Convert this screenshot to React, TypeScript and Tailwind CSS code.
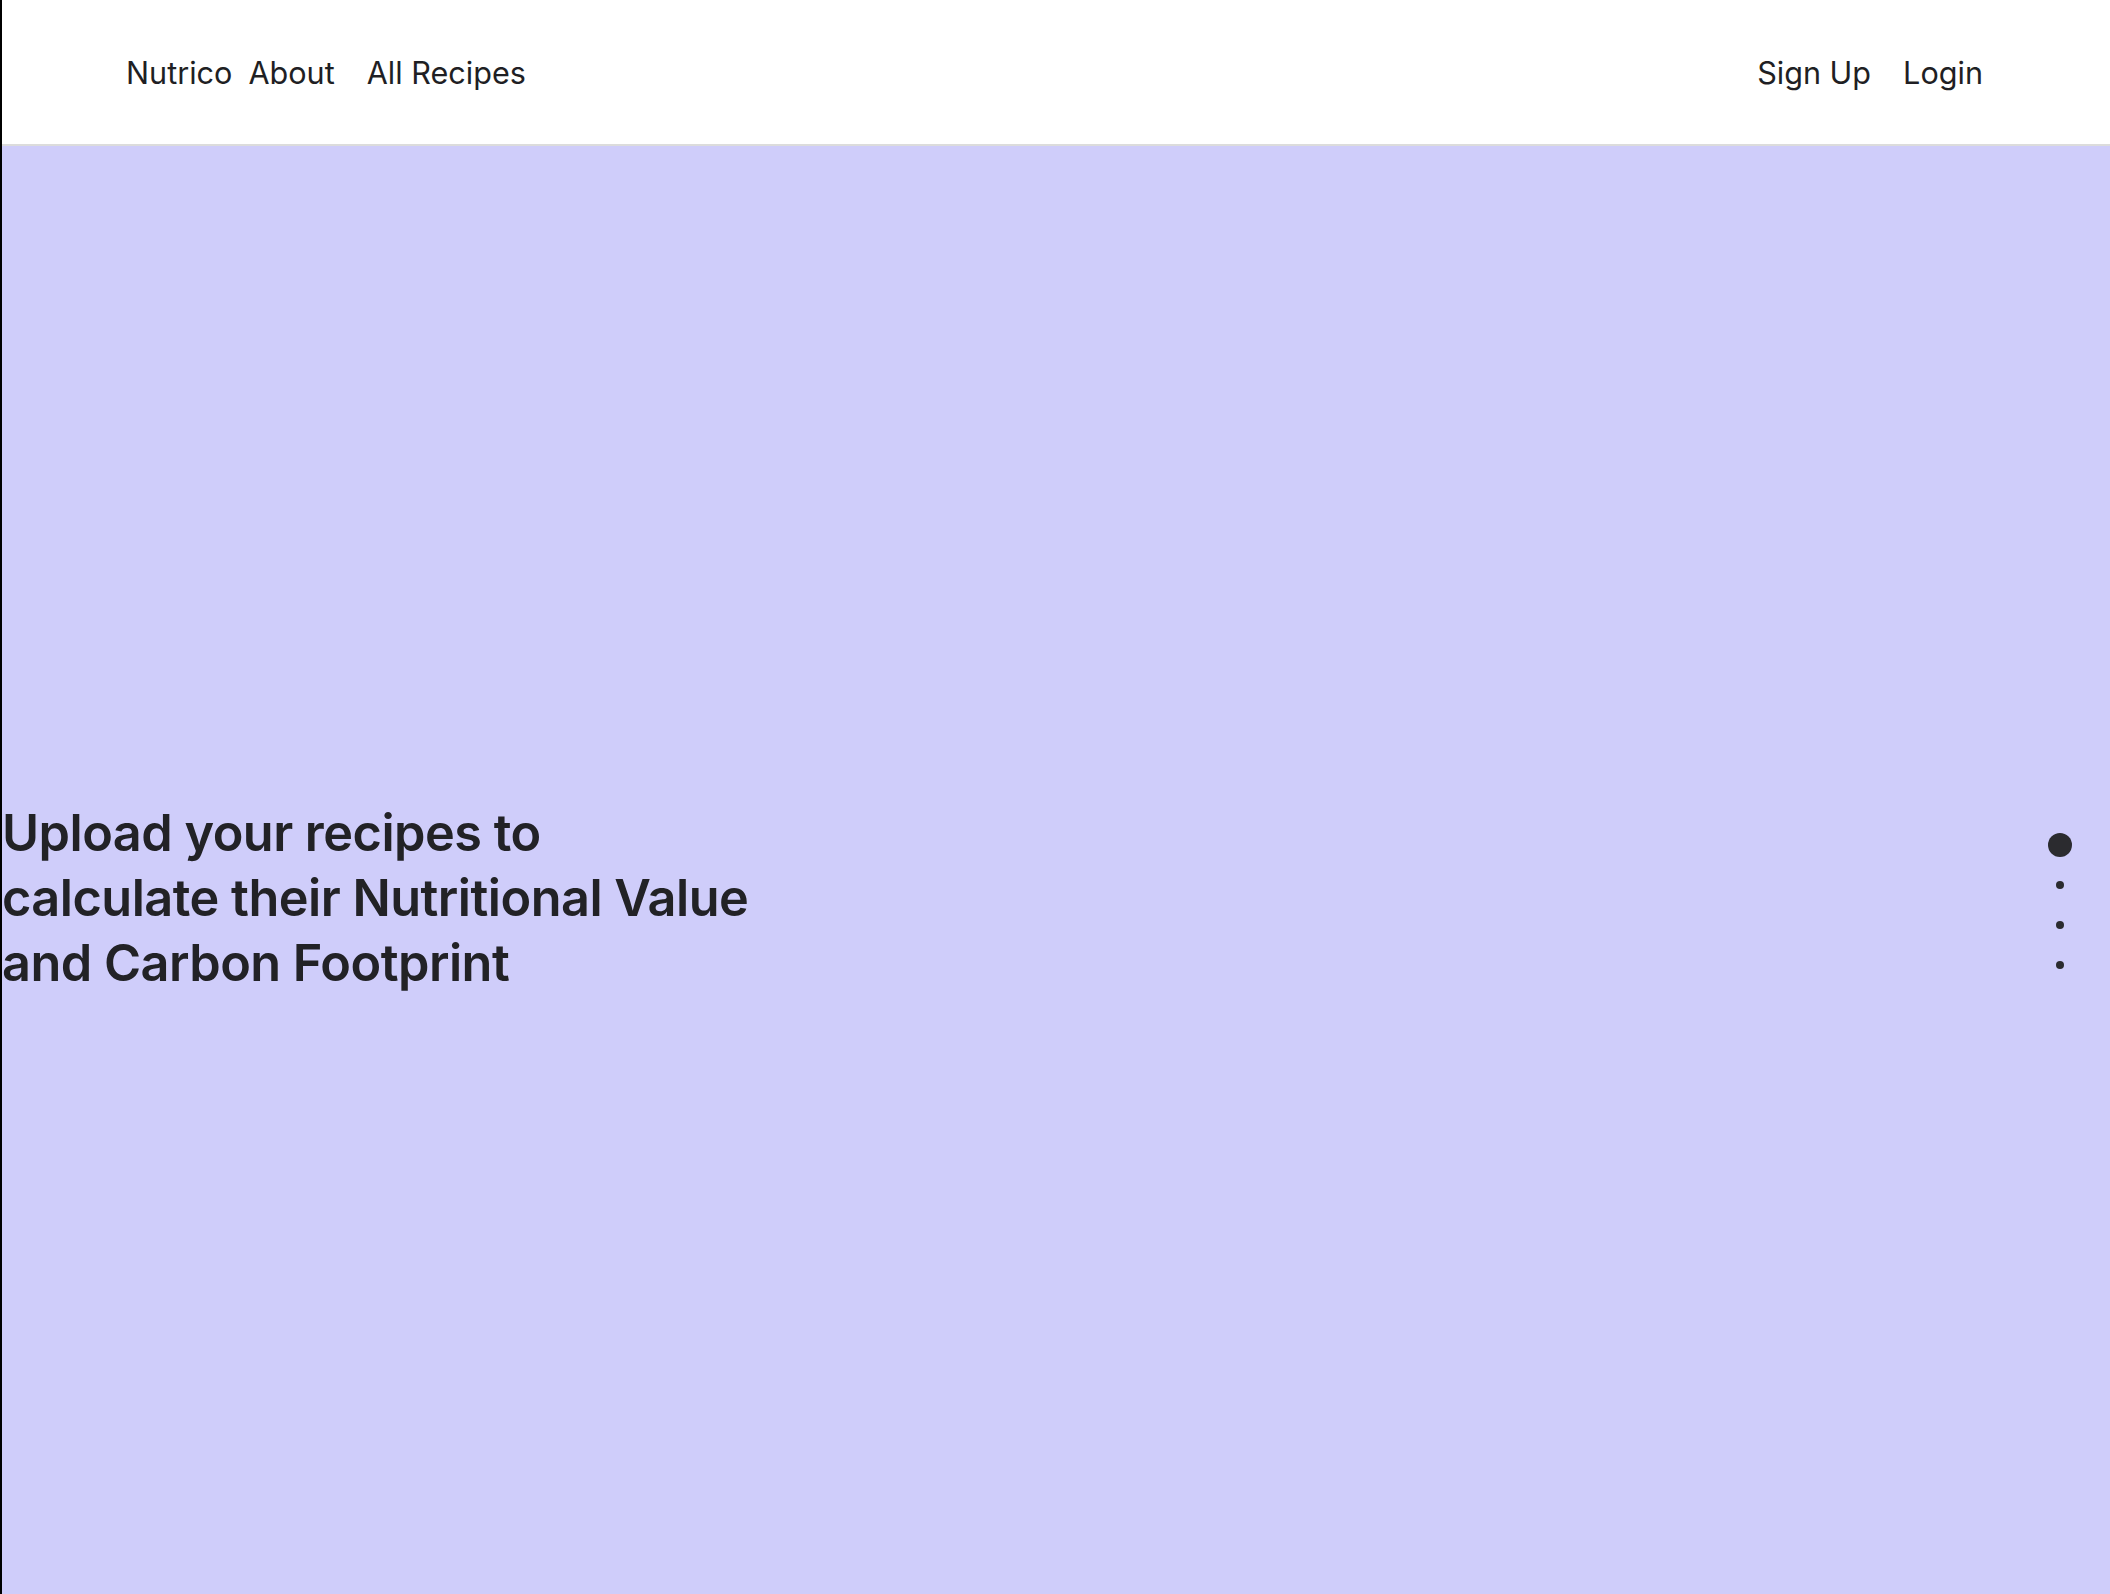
import React from "react";

export default function App() {
  const font = { fontFamily: "Inter, 'Noto Sans', Arial, sans-serif" };
  return (
    <div className="flex min-h-screen flex-col border-l-2 border-black bg-white" style={font}>
      <nav className="flex h-[146px] shrink-0 items-center justify-between border-b-2 border-[#dcdcdc] bg-white pt-[2px] pl-[124px] pr-[127px] text-[30.6px] leading-none text-[#1f1f24]">
        <div className="flex items-center">
          <span>Nutrico</span>
          <span className="ml-[16px]">About</span>
          <span className="ml-[32px]">All Recipes</span>
        </div>
        <div className="flex items-center">
          <span>Sign Up</span>
          <span className="ml-[32px]">Login</span>
        </div>
      </nav>
      <main className="flex flex-1 items-center justify-between bg-[#cfcdfa] pt-[54px] pr-[38px]">
        <h1 className="text-[50.4px] font-semibold leading-[65px] tracking-[-0.01em] text-[#222226]">
          Upload your recipes to
          <br />
          calculate their Nutritional Value
          <br />
          and Carbon Footprint
        </h1>
        <div className="mt-[8px] flex w-6 flex-col items-center">
          <span className="h-6 w-6 rounded-full bg-[#2b2b2f]" />
          <span className="mt-[24px] h-2 w-2 rounded-full bg-[#2b2b2f]" />
          <span className="mt-[32px] h-2 w-2 rounded-full bg-[#2b2b2f]" />
          <span className="mt-[32px] h-2 w-2 rounded-full bg-[#2b2b2f]" />
        </div>
      </main>
    </div>
  );
}
